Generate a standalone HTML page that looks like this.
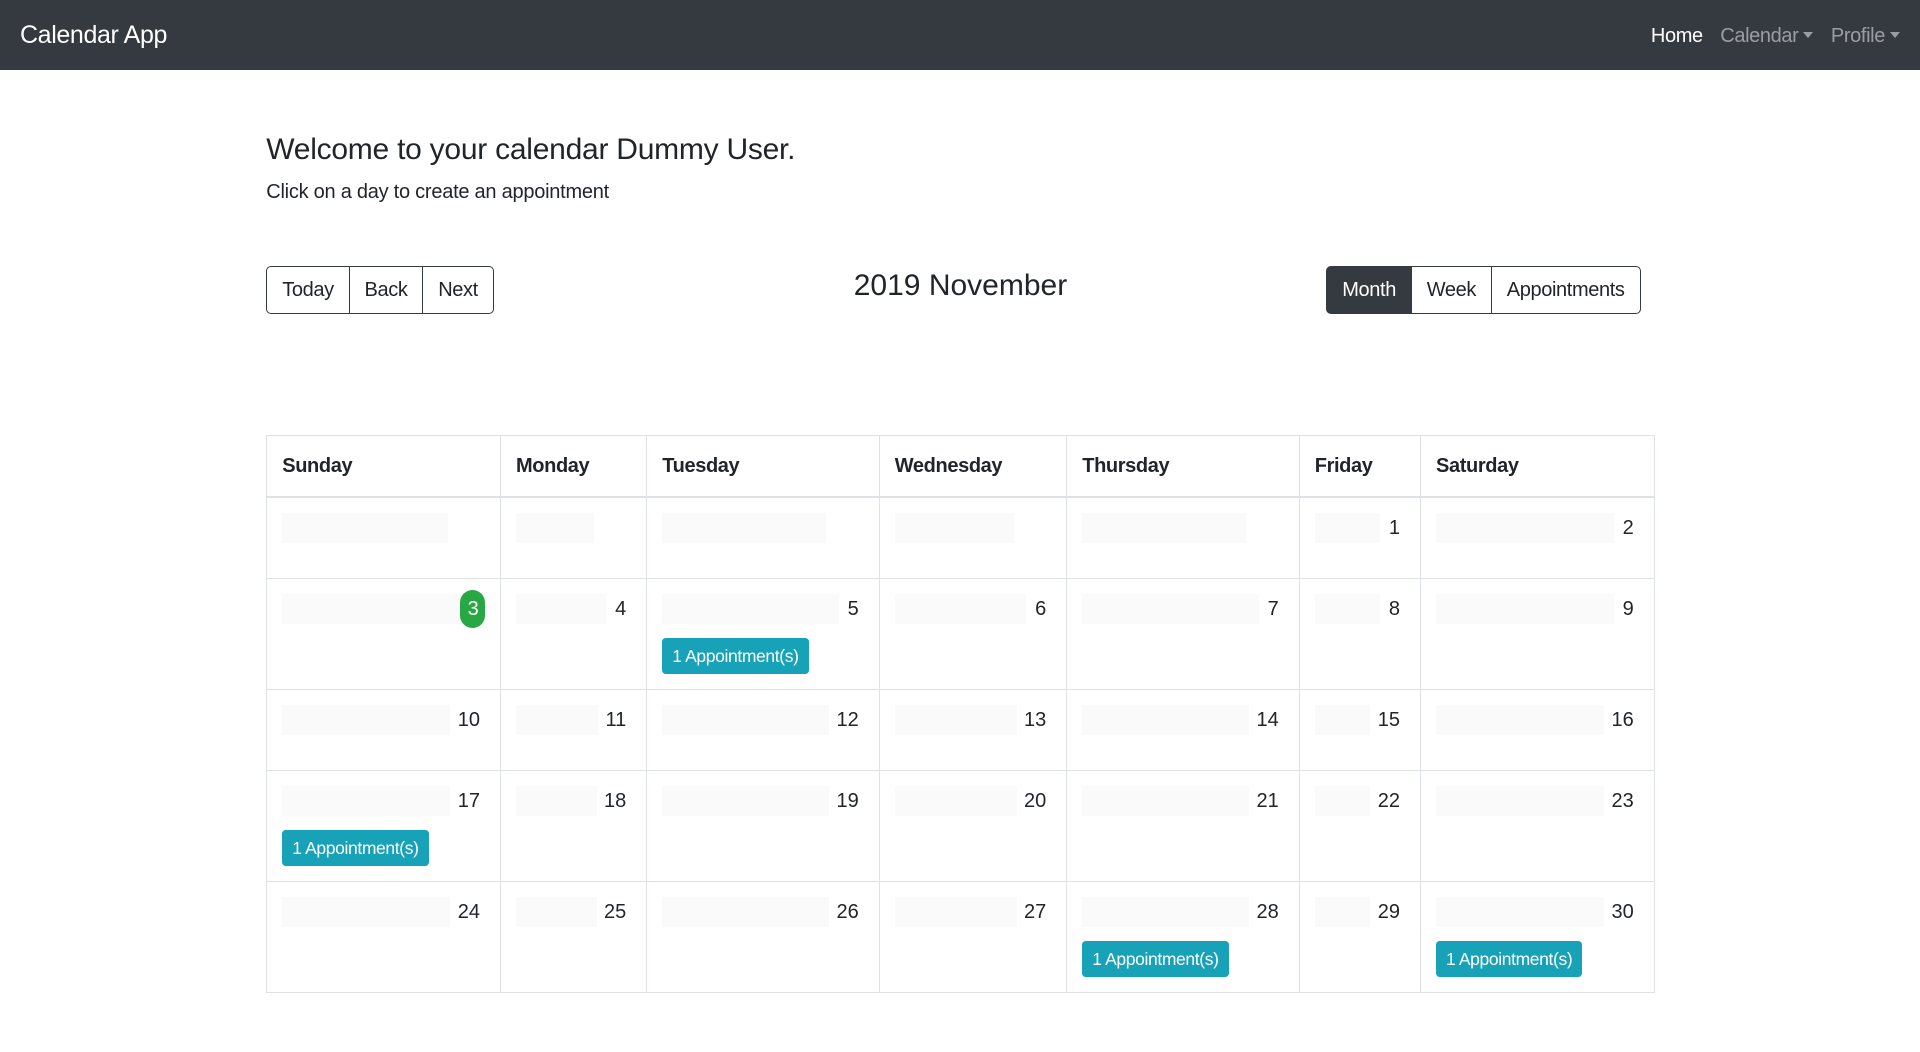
<!DOCTYPE html>
<html><head><meta charset="utf-8">
<style>
html{zoom:1.25}
body{margin:0;font-family:"Liberation Sans",sans-serif;color:#212529;font-size:16px;background:#fff;width:1536px;height:841px;overflow:hidden}
.nav{height:56px;background:#343a40;display:flex;align-items:center;justify-content:space-between;padding:0 16px;box-sizing:border-box}
.brand{color:#fff;font-size:20px;letter-spacing:-0.3px}
.links{display:flex;gap:14px;font-size:16px;letter-spacing:-0.3px;margin-top:2px}
.links span{color:rgba(255,255,255,.5)}
.links span.a{color:#fff}
.car{display:inline-block;border-top:5px solid rgba(255,255,255,.5);border-left:4px solid transparent;border-right:4px solid transparent;vertical-align:3px;margin-left:4px}
h4{position:absolute;top:106px;left:213px;margin:0;font-size:24px;font-weight:normal;letter-spacing:-0.2px}
.sub{position:absolute;top:145px;left:213px;font-size:16px;letter-spacing:-0.2px}
.grp{position:absolute;top:213px;display:flex;height:38px;letter-spacing:-0.3px}
.grp div{border:1px solid #343a40;padding:0 12px;line-height:38px;font-size:16px;margin-left:-1px}
.grp div:first-child{border-radius:4px 0 0 4px;margin-left:0}
.grp div:last-child{border-radius:0 4px 4px 0}
.title{position:absolute;top:215px;left:683px;font-size:24px;font-weight:normal}
table{position:absolute;top:348px;left:213px;border-collapse:collapse;width:1110px;table-layout:fixed}
td,th{border:1px solid #dee2e6;padding:12px;vertical-align:top;text-align:left}
th{height:24px;padding:15px 12px 9px;font-weight:bold;border-bottom:2px solid #dee2e6;letter-spacing:-0.3px}
.d{display:flex;background:#fafafa;height:24px;margin-right:10px}
.d i{flex:1}
.d b{font-weight:normal;background:#fff;padding:0 4px 0 6px;line-height:24px;min-width:10px;text-align:right}
.d b.g{background:#28a745;color:#fff;border-radius:10px;padding:2px 5px;line-height:26px;margin-top:-3px;height:26px}
tr.s td{height:40px}
tr.t td{height:64px}
.ap{display:inline-block;margin-top:11px;background:#17a2b8;color:#fff;font-size:14px;padding:0 8px;line-height:29px;border-radius:3px;letter-spacing:-0.3px;vertical-align:top}
</style></head><body>
<div class="nav"><div class="brand">Calendar App</div><div class="links"><span class="a">Home</span><span>Calendar<i class="car"></i></span><span>Profile<i class="car"></i></span></div></div>
<h4>Welcome to your calendar Dummy User.</h4>
<div class="sub">Click on a day to create an appointment</div>
<div class="grp" style="left:213px"><div>Today</div><div>Back</div><div>Next</div></div>
<div class="title">2019 November</div>
<div class="grp" style="left:1061px"><div style="background:#343a40;color:#fff">Month</div><div>Week</div><div>Appointments</div></div>
<table>
<colgroup><col style="width:187px"><col style="width:117px"><col style="width:186px"><col style="width:150px"><col style="width:186px"><col style="width:97px"><col style="width:187px"></colgroup>
<tr><th>Sunday</th><th>Monday</th><th>Tuesday</th><th>Wednesday</th><th>Thursday</th><th>Friday</th><th>Saturday</th></tr>
<tr class="s"><td><div class="d"><i></i><b></b></div></td><td><div class="d"><i></i><b></b></div></td><td><div class="d"><i></i><b></b></div></td><td><div class="d"><i></i><b></b></div></td><td><div class="d"><i></i><b></b></div></td><td><div class="d" style="margin-right:0"><i></i><b>1</b></div></td><td><div class="d" style="margin-right:0"><i></i><b>2</b></div></td></tr>
<tr class="t"><td><div class="d" style="margin-right:0"><i></i><b class="g">3</b></div></td><td><div class="d" style="margin-right:0"><i></i><b>4</b></div></td><td><div class="d" style="margin-right:0"><i></i><b>5</b></div><span class="ap">1 Appointment(s)</span></td><td><div class="d" style="margin-right:0"><i></i><b>6</b></div></td><td><div class="d" style="margin-right:0"><i></i><b>7</b></div></td><td><div class="d" style="margin-right:0"><i></i><b>8</b></div></td><td><div class="d" style="margin-right:0"><i></i><b>9</b></div></td></tr>
<tr class="s"><td><div class="d" style="margin-right:0"><i></i><b>10</b></div></td><td><div class="d" style="margin-right:0"><i></i><b>11</b></div></td><td><div class="d" style="margin-right:0"><i></i><b>12</b></div></td><td><div class="d" style="margin-right:0"><i></i><b>13</b></div></td><td><div class="d" style="margin-right:0"><i></i><b>14</b></div></td><td><div class="d" style="margin-right:0"><i></i><b>15</b></div></td><td><div class="d" style="margin-right:0"><i></i><b>16</b></div></td></tr>
<tr class="t"><td><div class="d" style="margin-right:0"><i></i><b>17</b></div><span class="ap">1 Appointment(s)</span></td><td><div class="d" style="margin-right:0"><i></i><b>18</b></div></td><td><div class="d" style="margin-right:0"><i></i><b>19</b></div></td><td><div class="d" style="margin-right:0"><i></i><b>20</b></div></td><td><div class="d" style="margin-right:0"><i></i><b>21</b></div></td><td><div class="d" style="margin-right:0"><i></i><b>22</b></div></td><td><div class="d" style="margin-right:0"><i></i><b>23</b></div></td></tr>
<tr class="t"><td><div class="d" style="margin-right:0"><i></i><b>24</b></div></td><td><div class="d" style="margin-right:0"><i></i><b>25</b></div></td><td><div class="d" style="margin-right:0"><i></i><b>26</b></div></td><td><div class="d" style="margin-right:0"><i></i><b>27</b></div></td><td><div class="d" style="margin-right:0"><i></i><b>28</b></div><span class="ap">1 Appointment(s)</span></td><td><div class="d" style="margin-right:0"><i></i><b>29</b></div></td><td><div class="d" style="margin-right:0"><i></i><b>30</b></div><span class="ap">1 Appointment(s)</span></td></tr>
</table>
</body></html>
